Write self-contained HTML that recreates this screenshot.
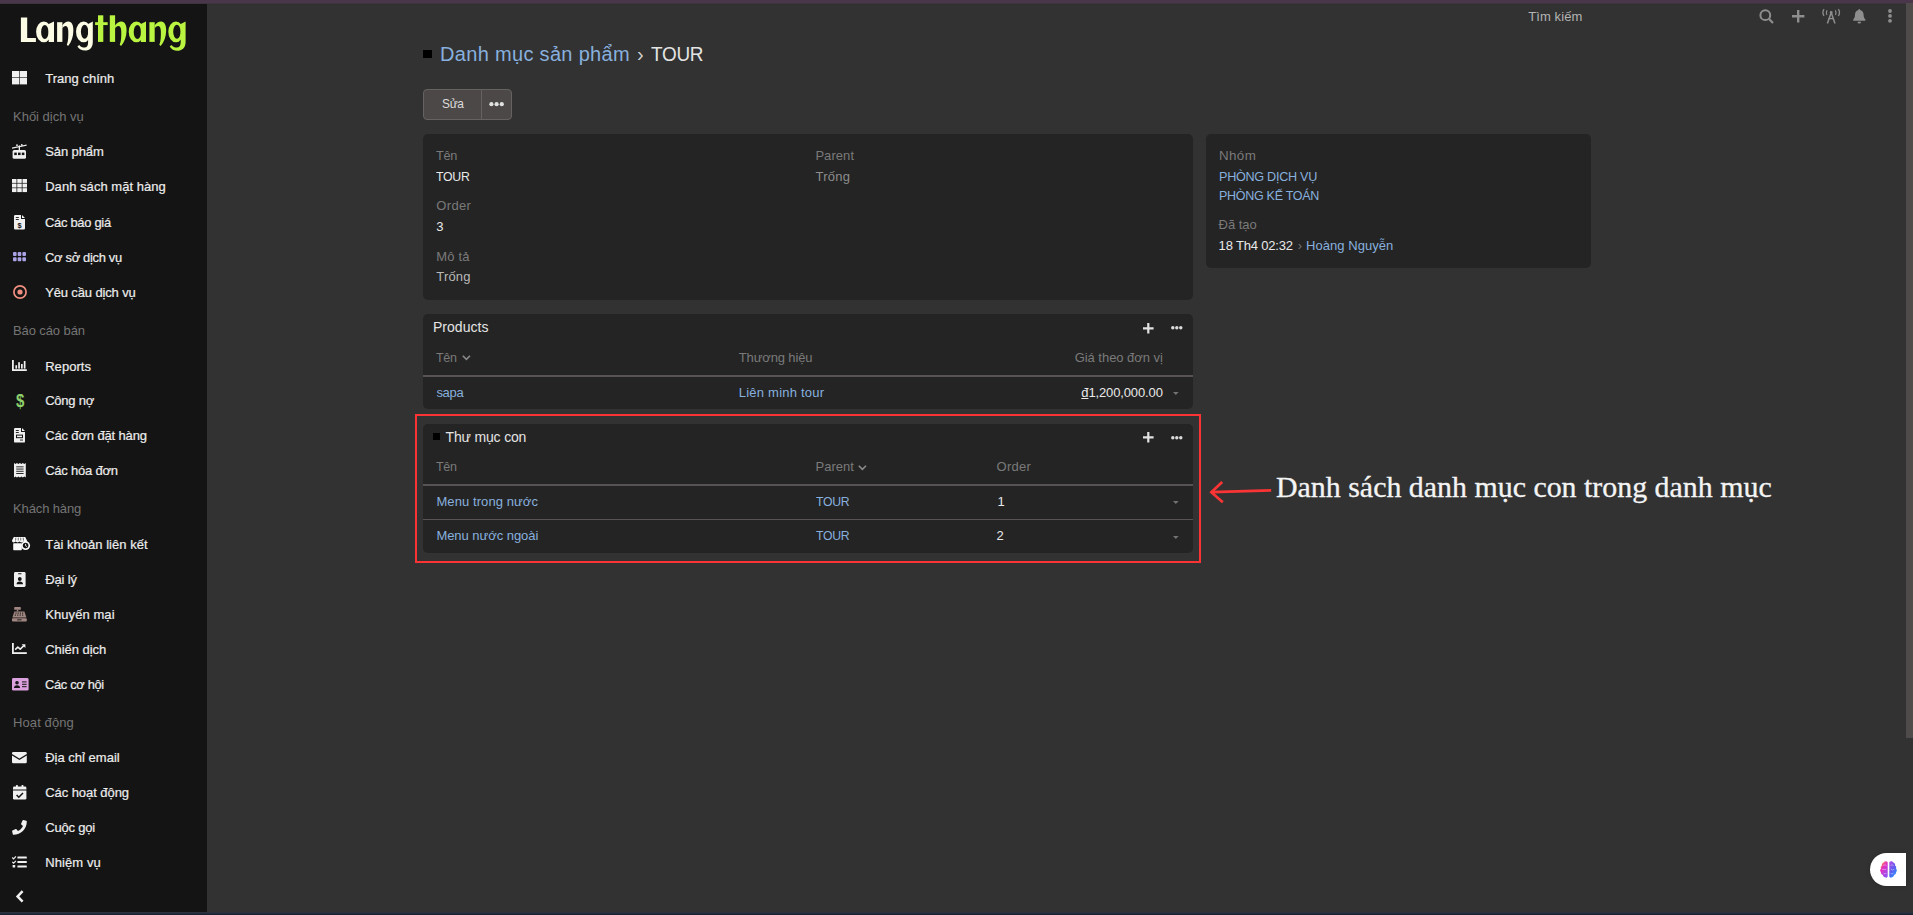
<!DOCTYPE html>
<html lang="vi">
<head>
<meta charset="utf-8">
<title>Danh mục sản phẩm › TOUR</title>
<style>
html,body{margin:0;padding:0;}
body{width:1913px;height:915px;overflow:hidden;position:relative;background:#323232;font-family:"Liberation Sans",sans-serif;}
.abs{position:absolute;}
.t{position:absolute;white-space:nowrap;font-family:"Liberation Sans",sans-serif;}
#topstrip{left:0;top:0;width:1913px;height:3px;background:#49364a;}
#topstrip2{left:0;top:3px;width:1913px;height:1px;background:#3d343e;}
#botstrip{left:0;top:912px;width:1913px;height:3px;background:linear-gradient(#2c3540,#17202d);}
#side{left:0;top:4px;width:207.4px;height:908px;background:#141414;}
#scroll{left:1906px;top:3px;width:7px;height:735px;background:#4f4b4a;}
.panel{position:absolute;background:#242424;border-radius:5px;}
.hr{position:absolute;height:1.25px;background:#575352;left:423.4px;width:769.2px;}
#btn{left:423px;top:89px;width:87px;height:29px;background:#4c4847;border:1px solid #666261;border-radius:4px;}
#btnsep{left:481px;top:90px;width:1px;height:29px;background:#666261;}
.dot{position:absolute;border-radius:50%;}
.red{background:#fa3434;}
#widget{left:1869.8px;top:853px;width:36.5px;height:33px;background:#fff;border-radius:16.5px 0 0 16.5px;box-shadow:0 0 5px rgba(0,0,0,.18);}
svg{position:absolute;overflow:visible;}
</style>
</head>
<body>
<div class="abs" id="side"></div>
<div class="abs" id="topstrip"></div>
<div class="abs" id="topstrip2"></div>
<div class="abs" id="botstrip"></div>
<div class="abs" id="scroll"></div>

<!-- panels -->
<div class="panel" style="left:423.4px;top:134px;width:769.2px;height:165.6px;"></div>
<div class="panel" style="left:1205.8px;top:134.4px;width:385.2px;height:133.2px;"></div>
<div class="panel" style="left:423.4px;top:314px;width:769.2px;height:95px;"></div>
<div class="panel" style="left:423.4px;top:424px;width:769.2px;height:129.4px;"></div>
<div class="hr" style="top:375.4px;"></div>
<div class="hr" style="top:484.4px;"></div>
<div class="hr" style="top:519.1px;"></div>

<!-- edit button -->
<div class="abs" id="btn"></div>
<div class="abs" id="btnsep"></div>

<!-- red annotation box -->
<div class="abs red" style="left:414.9px;top:413.8px;width:786.5px;height:1.75px;"></div>
<div class="abs red" style="left:414.9px;top:560.9px;width:786.5px;height:2.2px;"></div>
<div class="abs red" style="left:414.9px;top:413.8px;width:2.2px;height:149.3px;"></div>
<div class="abs red" style="left:1199.2px;top:413.8px;width:2.2px;height:149.3px;"></div>

<!-- chat widget -->
<div class="abs" id="widget"></div>

<div class="abs" style="left:423.4px;top:49.6px;width:8.8px;height:8.4px;background:#000"></div>
<div class="abs" style="left:432.7px;top:433.3px;width:7px;height:6.6px;background:#000"></div>
<svg style="left:12px;top:71.2px" width="15" height="13.4" viewBox="0 0 15 13.4"><g fill="#f0f0f0"><rect x="0" y="0" width="7.2" height="6.4"/><rect x="7.8" y="0" width="7.2" height="6.4"/><rect x="0" y="7" width="7.2" height="6.4"/><rect x="7.8" y="7" width="7.2" height="6.4"/></g></svg>
<svg style="left:12.4px;top:143.6px" width="14.6" height="14.8" viewBox="0 0 14.6 14.8"><g fill="#f0f0f0" stroke="none"><path d="M0 3.6 L14.6 0.6 L14.6 1.8 L0 4.8Z"/><rect x="6.7" y="1.4" width="1.3" height="5"/><circle cx="5" cy="1.2" r="0.9"/><circle cx="9.8" cy="0.9" r="0.9"/><rect x="0.6" y="6" width="13.4" height="8.8" rx="1.6"/></g><g fill="#141414"><rect x="2.2" y="8.6" width="2.6" height="2.5"/><rect x="6" y="8.6" width="2.6" height="2.5"/><rect x="9.8" y="8.6" width="2.6" height="2.5"/></g></svg>
<svg style="left:12px;top:179px" width="15" height="13.2" viewBox="0 0 15 13.2"><g fill="#f0f0f0"><rect x="0.00" y="0.00" width="4.5" height="3.9"/><rect x="5.25" y="0.00" width="4.5" height="3.9"/><rect x="10.50" y="0.00" width="4.5" height="3.9"/><rect x="0.00" y="4.60" width="4.5" height="3.9"/><rect x="5.25" y="4.60" width="4.5" height="3.9"/><rect x="10.50" y="4.60" width="4.5" height="3.9"/><rect x="0.00" y="9.20" width="4.5" height="3.9"/><rect x="5.25" y="9.20" width="4.5" height="3.9"/><rect x="10.50" y="9.20" width="4.5" height="3.9"/></g></svg>
<svg style="left:14.2px;top:214.6px" width="11" height="14.5" viewBox="0 0 11 14.5"><path fill="#f0f0f0" d="M1.2 0 H7 V4 H11 V13.3 Q11 14.5 9.8 14.5 H1.2 Q0 14.5 0 13.3 V1.2 Q0 0 1.2 0Z M8 0 L11 3 H8Z"/><g fill="#141414"><rect x="1.8" y="2" width="3" height="0.9"/><rect x="1.8" y="4" width="3" height="0.9"/></g><text x="5.5" y="12.6" font-family="Liberation Sans" font-weight="bold" font-size="7.4" text-anchor="middle" fill="#141414">$</text></svg>
<svg style="left:13px;top:252.2px" width="13" height="9.2" viewBox="0 0 13 9.2"><g fill="#a9a3e6"><rect x="0.00" y="0.00" width="3.6" height="3.9" rx="0.9"/><rect x="4.70" y="0.00" width="3.6" height="3.9" rx="0.9"/><rect x="9.40" y="0.00" width="3.6" height="3.9" rx="0.9"/><rect x="0.00" y="5.30" width="3.6" height="3.9" rx="0.9"/><rect x="4.70" y="5.30" width="3.6" height="3.9" rx="0.9"/><rect x="9.40" y="5.30" width="3.6" height="3.9" rx="0.9"/></g></svg>
<svg style="left:12.5px;top:285.2px" width="14" height="14" viewBox="0 0 14 14"><circle cx="7" cy="7" r="6.1" fill="none" stroke="#f08f80" stroke-width="1.7"/><circle cx="7" cy="7" r="2.6" fill="#f08f80"/></svg>
<svg style="left:12px;top:359.8px" width="14.8" height="11" viewBox="0 0 14.8 11"><g fill="#f0f0f0"><rect x="0" y="0" width="1.8" height="11"/><rect x="0" y="9.2" width="14.8" height="1.8"/><rect x="3.4" y="5.2" width="1.7" height="3.4"/><rect x="6.2" y="2.2" width="1.7" height="6.4"/><rect x="9" y="4" width="1.7" height="4.6"/><rect x="11.8" y="1" width="1.7" height="7.6"/></g></svg>
<span class="t" style="left:15.5px;top:390.6px;font-size:17.5px;line-height:20px;font-weight:bold;color:#8ed06c;transform:scaleX(.86);transform-origin:0 0;">$</span>
<svg style="left:13.8px;top:428.4px" width="11.2" height="14.6" viewBox="0 0 11.2 14.6"><path fill="#f0f0f0" d="M1.2 0 H7 V4 H11 V13.4 Q11 14.6 9.8 14.6 H1.2 Q0 14.6 0 13.4 V1.2 Q0 0 1.2 0Z M8 0 L11 3 H8Z"/><g fill="#141414"><rect x="1.8" y="2" width="3" height="0.9"/><rect x="1.8" y="4" width="3" height="0.9"/><rect x="2" y="6.6" width="7" height="3.6"/><rect x="6" y="11.6" width="3" height="0.9"/></g><rect x="3" y="7.6" width="5" height="1.6" fill="#f0f0f0"/></svg>
<svg style="left:13.5px;top:463.2px" width="11.8" height="14.6" viewBox="0 0 11.8 14.6"><path fill="#f0f0f0" d="M0 0 L1.5 1 L2.95 0 L4.4 1 L5.9 0 L7.4 1 L8.85 0 L10.3 1 L11.8 0 V14.6 L10.3 13.6 L8.85 14.6 L7.4 13.6 L5.9 14.6 L4.4 13.6 L2.95 14.6 L1.5 13.6 L0 14.6Z"/><g fill="#141414"><rect x="2.2" y="3.4" width="7.4" height="0.9"/><rect x="2.2" y="5.6" width="7.4" height="0.9"/><rect x="2.2" y="7.8" width="7.4" height="0.9"/><rect x="2.2" y="10" width="7.4" height="0.9"/></g></svg>
<svg style="left:12.2px;top:537.2px" width="18" height="13.4" viewBox="0 0 18 13.4"><g fill="#fafafa"><path d="M1.8 0 H13.2 L15 3.4 Q15 5.4 13.2 5.4 Q12 5.4 11.4 4.6 Q10.6 5.4 9.4 5.4 Q8.2 5.4 7.5 4.6 Q6.8 5.4 5.6 5.4 Q4.4 5.4 3.6 4.6 Q3 5.4 1.8 5.4 Q0 5.4 0 3.4Z"/><rect x="1.2" y="6.2" width="8.6" height="7" rx="0.6"/><circle cx="13.6" cy="8.6" r="4.5"/></g><g stroke="#141414" stroke-width="0.6" fill="none"><path d="M3.8 0.6 L3.6 3.6"/><path d="M6.3 0.6 L6.2 3.6"/><path d="M8.7 0.6 L8.8 3.6"/><path d="M11.2 0.6 L11.5 3.6"/></g><circle cx="13.6" cy="8.6" r="2.8" fill="#141414"/><path d="M13.6 6.9 V8.8 L14.9 9.6" stroke="#fafafa" stroke-width="0.9" fill="none"/></svg>
<svg style="left:13.6px;top:571.6px" width="11.6" height="15" viewBox="0 0 11.6 15"><rect x="0" y="0" width="11.6" height="15" rx="1.4" fill="#f0f0f0"/><g fill="#141414"><rect x="4" y="1.3" width="3.6" height="0.9" rx="0.4"/><circle cx="5.8" cy="7" r="1.9"/><path d="M2.6 12.2 Q2.6 9.6 5.8 9.6 Q9 9.6 9 12.2Z"/></g></svg>
<svg style="left:12.2px;top:606.8px" width="14.8" height="14.6" viewBox="0 0 14.8 14.6"><g fill="#a18781"><rect x="2.2" y="0" width="6.6" height="2.8" rx="0.5"/><rect x="4.8" y="2.8" width="1.5" height="1.6"/><path d="M2.4 4.4 H12.4 L14.4 10.6 H0.4Z"/><rect x="0" y="11.2" width="14.8" height="3.4" rx="0.8"/></g><g fill="#141414"><rect x="3.4" y="5.6" width="1.2" height="1"/><rect x="5.6" y="5.6" width="1.2" height="1"/><rect x="7.8" y="5.6" width="1.2" height="1"/><rect x="10" y="5.6" width="1.2" height="1"/><rect x="2.8" y="7.6" width="1.2" height="1"/><rect x="5.2" y="7.6" width="1.2" height="1"/><rect x="7.6" y="7.6" width="1.2" height="1"/><rect x="10" y="7.6" width="1.2" height="1"/><rect x="5.2" y="12.4" width="4.4" height="0.9"/></g></svg>
<svg style="left:12.2px;top:643.2px" width="14.8" height="11" viewBox="0 0 14.8 11"><g fill="#f0f0f0"><rect x="0" y="0" width="1.8" height="11"/><rect x="0" y="9.2" width="14.8" height="1.8"/></g><path d="M3.2 6.6 L5.8 4 L8.2 6.2 L12 2.4" stroke="#f0f0f0" stroke-width="1.6" fill="none" stroke-linejoin="round"/><path d="M9.6 1.2 H13.4 V5Z" fill="#f0f0f0"/></svg>
<svg style="left:12.2px;top:677.8px" width="16.6" height="12.6" viewBox="0 0 16.6 12.6"><rect x="0" y="0" width="16.6" height="12.6" rx="1.4" fill="#dba1de"/><g fill="#141414"><circle cx="5" cy="4.8" r="1.8"/><path d="M2 10 Q2 7.2 5 7.2 Q8 7.2 8 10Z"/><rect x="10" y="3.4" width="4.6" height="1"/><rect x="10" y="5.8" width="4.6" height="1"/><rect x="10" y="8.2" width="4.6" height="1"/></g></svg>
<svg style="left:12.2px;top:752.2px" width="14.8" height="11.2" viewBox="0 0 14.8 11.2"><path fill="#f0f0f0" d="M1.3 0 H13.5 Q14.8 0 14.8 1.3 V2 L7.4 6.6 L0 2 V1.3 Q0 0 1.3 0Z"/><path fill="#f0f0f0" d="M0 3.5 L7.4 8.1 L14.8 3.5 V9.9 Q14.8 11.2 13.5 11.2 H1.3 Q0 11.2 0 9.9Z"/></svg>
<svg style="left:12.8px;top:785.4px" width="13.4" height="14.6" viewBox="0 0 13.4 14.6"><g fill="#f0f0f0"><rect x="3" y="0" width="1.8" height="3" rx="0.5"/><rect x="8.6" y="0" width="1.8" height="3" rx="0.5"/><path d="M1.3 1.6 H12.1 Q13.4 1.6 13.4 2.9 V4.6 H0 V2.9 Q0 1.6 1.3 1.6Z"/><path d="M0 5.5 H13.4 V13.3 Q13.4 14.6 12.1 14.6 H1.3 Q0 14.6 0 13.3Z"/></g><path d="M3.6 10 L5.8 12.2 L10 8" stroke="#141414" stroke-width="1.5" fill="none"/></svg>
<svg style="left:12.2px;top:820.4px" width="14.8" height="14.8" viewBox="0 0 14.8 14.8"><path fill="#f0f0f0" d="M11.3 0.1 L14.2 0.8 Q14.8 1 14.8 1.5 C14.8 8.9 8.9 14.8 1.5 14.8 Q1 14.8 0.8 14.2 L0.1 11.3 Q0 10.7 0.5 10.5 L3.7 9.1 Q4.2 8.9 4.5 9.3 L5.9 11 C8.1 10 10 8.1 11 5.9 L9.3 4.5 Q8.9 4.2 9.1 3.7 L10.5 0.5 Q10.7 0 11.3 0.1Z"/></svg>
<svg style="left:12.2px;top:856.4px" width="14.8" height="12" viewBox="0 0 14.8 12"><g fill="#f0f0f0"><rect x="5.4" y="0.6" width="9.4" height="2" rx="0.5"/><rect x="5.4" y="5" width="9.4" height="2" rx="0.5"/><rect x="5.4" y="9.4" width="9.4" height="2" rx="0.5"/><rect x="0.6" y="9" width="2.6" height="2.6" rx="0.6"/></g><g stroke="#f0f0f0" stroke-width="1.2" fill="none"><path d="M0.3 1.5 L1.6 2.8 L3.9 0.4"/><path d="M0.3 5.9 L1.6 7.2 L3.9 4.8"/></g></svg>
<svg style="left:16px;top:890px" width="8" height="12.8" viewBox="0 0 8 12.8"><path d="M6.6 1.2 L1.6 6.4 L6.6 11.6" stroke="#f0f0f0" stroke-width="2.5" fill="none"/></svg>
<svg style="left:1759px;top:9px" width="15" height="15" viewBox="0 0 15 15"><circle cx="6.3" cy="6.2" r="4.9" fill="none" stroke="#8e8e8e" stroke-width="2"/><path d="M9.8 9.8 L14 14" stroke="#8e8e8e" stroke-width="2.2"/></svg>
<svg style="left:1792px;top:10.1px" width="12.4" height="12.4" viewBox="0 0 12.4 12.4"><path d="M6.2 0 V12.4 M0 6.2 H12.4" stroke="#8e8e8e" stroke-width="2.4" fill="none"/></svg>
<svg style="left:1822px;top:9.2px" width="18.4" height="14.6" viewBox="0 0 18.4 14.6"><g stroke="#8e8e8e" fill="none"><path d="M9.2 3.6 L5.4 14.4 M9.2 3.6 L13 14.4" stroke-width="1.5"/><path d="M6.6 9.6 H11.8" stroke-width="1.3"/><path d="M5 1.2 Q3.8 3.6 5 6" stroke-width="1.2"/><path d="M13.4 1.2 Q14.6 3.6 13.4 6" stroke-width="1.2"/><path d="M2 0.2 Q-0.2 3.6 2 7" stroke-width="1.3"/><path d="M16.4 0.2 Q18.6 3.6 16.4 7" stroke-width="1.3"/></g><circle cx="9.2" cy="3.4" r="1.4" fill="#8e8e8e"/></svg>
<svg style="left:1853px;top:9px" width="12.6" height="14.6" viewBox="0 0 12.6 14.6"><path fill="#8e8e8e" d="M6.3 0 Q7.1 0 7.1 0.9 C9.6 1.5 10.6 3.4 10.6 5.8 C10.6 8.6 11.6 9.6 12.4 10.4 Q12.8 11.8 11.8 11.8 H0.8 Q-0.2 11.8 0.2 10.4 C1 9.6 2 8.6 2 5.8 C2 3.4 3 1.5 5.5 0.9 Q5.5 0 6.3 0Z"/><path fill="#8e8e8e" d="M4.5 12.7 H8.1 Q8.1 14.6 6.3 14.6 Q4.5 14.6 4.5 12.7Z"/></svg>
<svg style="left:1887.6px;top:9.0px" width="4" height="14" viewBox="0 0 4 14"><g fill="#8e8e8e"><circle cx="2" cy="2" r="1.9"/><circle cx="2" cy="6.9" r="1.9"/><circle cx="2" cy="11.8" r="1.9"/></g></svg>
<svg style="left:488.8px;top:101.9px" width="15" height="4.4" viewBox="0 0 15 4.4"><g fill="#e2e2e2"><circle cx="2.4" cy="2.2" r="2.1"/><circle cx="7.6" cy="2.2" r="2.1"/><circle cx="12.8" cy="2.2" r="2.1"/></g></svg>
<svg style="left:1142.8px;top:322.5px" width="10.6" height="10.6" viewBox="0 0 10.6 10.6"><path d="M5.3 0 V10.6 M0 5.3 H10.6" stroke="#e2e2e2" stroke-width="2.2" fill="none"/></svg>
<svg style="left:1171.4px;top:326.0px" width="11.6" height="3.6" viewBox="0 0 11.6 3.6"><g fill="#dcdcdc"><circle cx="1.8" cy="1.8" r="1.7"/><circle cx="5.8" cy="1.8" r="1.7"/><circle cx="9.8" cy="1.8" r="1.7"/></g></svg>
<svg style="left:1142.8px;top:432.3px" width="10.6" height="10.6" viewBox="0 0 10.6 10.6"><path d="M5.3 0 V10.6 M0 5.3 H10.6" stroke="#e2e2e2" stroke-width="2.2" fill="none"/></svg>
<svg style="left:1171.4px;top:435.8px" width="11.6" height="3.6" viewBox="0 0 11.6 3.6"><g fill="#dcdcdc"><circle cx="1.8" cy="1.8" r="1.7"/><circle cx="5.8" cy="1.8" r="1.7"/><circle cx="9.8" cy="1.8" r="1.7"/></g></svg>
<svg style="left:1172.8px;top:391.6px" width="5.6" height="3" viewBox="0 0 5.6 3"><path d="M0 0 H5.6 L2.8 3Z" fill="#737373"/></svg>
<svg style="left:1172.8px;top:501.4px" width="5.6" height="3" viewBox="0 0 5.6 3"><path d="M0 0 H5.6 L2.8 3Z" fill="#737373"/></svg>
<svg style="left:1172.8px;top:536.2px" width="5.6" height="3" viewBox="0 0 5.6 3"><path d="M0 0 H5.6 L2.8 3Z" fill="#737373"/></svg>
<svg style="left:461.8px;top:355.20000000000005px" width="8.8" height="5.4" viewBox="0 0 8.8 5.4"><path d="M0.8 0.8 L4.4 4.4 L8 0.8" stroke="#8a8a8a" stroke-width="1.6" fill="none"/></svg>
<svg style="left:858.0px;top:464.6px" width="8.8" height="5.4" viewBox="0 0 8.8 5.4"><path d="M0.8 0.8 L4.4 4.4 L8 0.8" stroke="#8a8a8a" stroke-width="1.6" fill="none"/></svg>
<svg style="left:1208px;top:478px" width="66" height="28" viewBox="0 0 66 28"><g stroke="#fa3434" stroke-width="2.7" fill="none" stroke-linecap="butt" stroke-linejoin="miter"><path d="M3.6 14.1 L63.2 12.4"/><path d="M14.2 3.9 L3.4 14.2 L14.8 24.3"/></g></svg>
<svg style="left:1879.5px;top:861px" width="17.1" height="16.8" viewBox="0 0 17.1 16.8"><defs><linearGradient id="bg1" x1="0.2" y1="0" x2="0.8" y2="1"><stop offset="0" stop-color="#ff9a30"/><stop offset=".38" stop-color="#e22fc4"/><stop offset="1" stop-color="#8a55f4"/></linearGradient><linearGradient id="bg2" x1="0.2" y1="0" x2="0.8" y2="1"><stop offset="0" stop-color="#a94fe6"/><stop offset=".55" stop-color="#5560f2"/><stop offset="1" stop-color="#2aa6ff"/></linearGradient></defs><path fill="url(#bg1)" d="M7.7 1.2 C7 0 4.6 -0.2 3.6 1.6 C2.2 2 1.6 3.4 1.9 4.6 C0.7 5.4 0.5 6.8 1 7.8 C-0.2 8.6 -0.2 10.2 0.9 11 C0.6 12.4 1.5 13.6 2.7 13.8 C3 15.6 4.6 16.4 5.6 16.6 C6.8 16.9 7.7 16 7.7 15Z"/><path fill="url(#bg2)" d="M9.3 1.2 C10 0 12.4 -0.2 13.4 1.6 C14.8 2 15.4 3.4 15.1 4.6 C16.3 5.4 16.5 6.8 16 7.8 C17.2 8.6 17.2 10.2 16.1 11 C16.4 12.4 15.5 13.6 14.3 13.8 C14 15.6 12.4 16.4 11.4 16.6 C10.2 16.9 9.3 16 9.3 15Z"/><g stroke="#fff" stroke-opacity=".5" stroke-width=".8" fill="none"><path d="M3.4 4.4 Q5 3.2 6.4 4.4"/><path d="M2.2 8.4 H6.2"/><path d="M3.6 12.2 Q5 13.4 6.4 12.4"/><path d="M10.6 4.4 Q12 3.2 13.6 4.6"/><path d="M10.8 8 L12.4 9.2 L14.4 8"/><path d="M10.6 12.4 Q12 13.4 13.4 12.2"/></g></svg>
<svg style="left:0;top:0" width="207" height="60" viewBox="0 0 207 60"><g fill="#fcfce4"><path d="M20.9 17.4 H27.2 V38.1 H35.9 V41.9 H20.9Z"/><path fill-rule="evenodd" d="M36.10 31.8 A7.7 10.4 0 1 0 51.50 31.8 A7.7 10.4 0 1 0 36.10 31.8Z M41.10 32 A3.7 7 0 1 1 48.50 32 A3.7 7 0 1 1 41.10 32Z"/><path d="M48.70 24 L54.00 21.4 V41.9 H48.70Z"/><rect x="57.1" y="22.2" width="5.3" height="19.70"/><path d="M62.40 25.2 C64.04 23 66.45 21.4 68.47 21.5 C71.94 21.7 73.49 25.5 73.39 30.5 C73.29 36.5 71.56 42 68.09 45.9 L66.83 44.7 C68.38 41 68.38 36 68.28 31 C68.18 27.4 67.12 26 65.58 26 C64.23 26 63.07 27.2 62.40 28.6Z"/><path fill-rule="evenodd" d="M76.00 31.8 A7.6 10.4 0 1 0 91.20 31.8 A7.6 10.4 0 1 0 76.00 31.8Z M80.90 31.8 A3.7 7 0 1 1 88.30 31.8 A3.7 7 0 1 1 80.90 31.8Z"/><path d="M88.10 24 L92.80 21.6 V42 C92.80 48 89.50 50.5 85.00 50.5 C81.80 50.5 79.00 49.2 77.40 46.4 L79.20 44.9 C80.60 46.9 82.60 47.6 84.40 47.6 C87.00 47.6 88.10 45.6 88.10 42Z"/></g><g fill="#b8f440"><rect x="98" y="15.3" width="5.3" height="26.6"/><rect x="95.1" y="22.2" width="12.6" height="2.85"/><rect x="109.8" y="15.3" width="5.3" height="26.60"/><path d="M115.10 25.2 C116.81 23 119.33 21.4 121.44 21.5 C125.06 21.7 126.67 25.5 126.57 30.5 C126.47 36.5 124.66 42 121.04 45.9 L119.73 44.7 C121.34 41 121.34 36 121.24 31 C121.14 27.4 120.03 26 118.42 26 C117.01 26 115.80 27.2 115.10 28.6Z"/><path fill-rule="evenodd" d="M128.70 31.8 A7.7 10.4 0 1 0 144.10 31.8 A7.7 10.4 0 1 0 128.70 31.8Z M133.70 32 A3.7 7 0 1 1 141.10 32 A3.7 7 0 1 1 133.70 32Z"/><path d="M140.80 24 L146.00 21.4 V41.9 H140.80Z"/><rect x="149.4" y="22.2" width="5.3" height="19.70"/><path d="M154.70 25.2 C156.41 23 158.93 21.4 161.04 21.5 C164.66 21.7 166.27 25.5 166.17 30.5 C166.07 36.5 164.26 42 160.64 45.9 L159.33 44.7 C160.94 41 160.94 36 160.84 31 C160.74 27.4 159.63 26 158.02 26 C156.61 26 155.40 27.2 154.70 28.6Z"/><path fill-rule="evenodd" d="M168.30 31.8 A7.6 10.4 0 1 0 183.50 31.8 A7.6 10.4 0 1 0 168.30 31.8Z M173.20 31.8 A3.7 7 0 1 1 180.60 31.8 A3.7 7 0 1 1 173.20 31.8Z"/><path d="M180.70 24 L185.60 21.6 V42 C185.60 48 181.80 50.8 177.30 50.8 C174.10 50.8 171.30 49.2 169.70 46.4 L171.50 44.9 C172.90 46.9 174.90 47.6 176.70 47.6 C179.30 47.6 180.70 45.6 180.70 42Z"/></g></svg>

<span class="t" style="left:45.2px;top:70.7px;font-size:13px;line-height:16px;color:#ececec;letter-spacing:0.02px;-webkit-text-stroke:.2px #ececec;">Trang chính</span>
<span class="t" style="left:45.2px;top:143.7px;font-size:13px;line-height:16px;color:#ececec;letter-spacing:-0.1px;-webkit-text-stroke:.2px #ececec;">Sản phẩm</span>
<span class="t" style="left:45.2px;top:178.7px;font-size:13px;line-height:16px;color:#ececec;letter-spacing:0.04px;-webkit-text-stroke:.2px #ececec;">Danh sách mặt hàng</span>
<span class="t" style="left:45.2px;top:214.8px;font-size:13px;line-height:16px;color:#ececec;letter-spacing:-0.3px;transform:scaleX(0.9956);transform-origin:0 0;-webkit-text-stroke:.2px #ececec;">Các báo giá</span>
<span class="t" style="left:45.2px;top:249.9px;font-size:13px;line-height:16px;color:#ececec;letter-spacing:-0.3px;transform:scaleX(0.9928);transform-origin:0 0;-webkit-text-stroke:.2px #ececec;">Cơ sở dịch vụ</span>
<span class="t" style="left:45.2px;top:284.8px;font-size:13px;line-height:16px;color:#ececec;letter-spacing:-0.14px;-webkit-text-stroke:.2px #ececec;">Yêu cầu dịch vụ</span>
<span class="t" style="left:45.2px;top:358.5px;font-size:13px;line-height:16px;color:#ececec;letter-spacing:0.04px;-webkit-text-stroke:.2px #ececec;">Reports</span>
<span class="t" style="left:45.2px;top:393.3px;font-size:13px;line-height:16px;color:#ececec;letter-spacing:-0.24px;-webkit-text-stroke:.2px #ececec;">Công nợ</span>
<span class="t" style="left:45.2px;top:428.1px;font-size:13px;line-height:16px;color:#ececec;letter-spacing:-0.14px;-webkit-text-stroke:.2px #ececec;">Các đơn đặt hàng</span>
<span class="t" style="left:45.2px;top:463.1px;font-size:13px;line-height:16px;color:#ececec;letter-spacing:-0.22px;-webkit-text-stroke:.2px #ececec;">Các hóa đơn</span>
<span class="t" style="left:45.2px;top:536.6px;font-size:13px;line-height:16px;color:#ececec;letter-spacing:0.03px;-webkit-text-stroke:.2px #ececec;">Tài khoản liên kết</span>
<span class="t" style="left:45.2px;top:571.7px;font-size:13px;line-height:16px;color:#ececec;letter-spacing:-0.16px;-webkit-text-stroke:.2px #ececec;">Đại lý</span>
<span class="t" style="left:45.2px;top:606.5px;font-size:13px;line-height:16px;color:#ececec;letter-spacing:0.08px;-webkit-text-stroke:.2px #ececec;">Khuyến mại</span>
<span class="t" style="left:45.2px;top:641.5px;font-size:13px;line-height:16px;color:#ececec;letter-spacing:-0.05px;-webkit-text-stroke:.2px #ececec;">Chiến dịch</span>
<span class="t" style="left:45.2px;top:676.5px;font-size:13px;line-height:16px;color:#ececec;letter-spacing:-0.3px;transform:scaleX(0.9864);transform-origin:0 0;-webkit-text-stroke:.2px #ececec;">Các cơ hội</span>
<span class="t" style="left:45.2px;top:750.3px;font-size:13px;line-height:16px;color:#ececec;letter-spacing:0.01px;-webkit-text-stroke:.2px #ececec;">Địa chỉ email</span>
<span class="t" style="left:45.2px;top:785.3px;font-size:13px;line-height:16px;color:#ececec;letter-spacing:-0.06px;-webkit-text-stroke:.2px #ececec;">Các hoạt động</span>
<span class="t" style="left:45.2px;top:820.3px;font-size:13px;line-height:16px;color:#ececec;letter-spacing:-0.19px;-webkit-text-stroke:.2px #ececec;">Cuộc gọi</span>
<span class="t" style="left:45.2px;top:855.1px;font-size:13px;line-height:16px;color:#ececec;letter-spacing:0.1px;-webkit-text-stroke:.2px #ececec;">Nhiệm vụ</span>
<span class="t" style="left:13.0px;top:109.1px;font-size:13px;line-height:16px;color:#757575;letter-spacing:-0.01px;">Khối dịch vụ</span>
<span class="t" style="left:13.0px;top:322.5px;font-size:13px;line-height:16px;color:#757575;letter-spacing:-0.1px;">Báo cáo bán</span>
<span class="t" style="left:13.0px;top:501.1px;font-size:13px;line-height:16px;color:#757575;letter-spacing:-0.12px;">Khách hàng</span>
<span class="t" style="left:13.0px;top:715.3px;font-size:13px;line-height:16px;color:#757575;letter-spacing:0.1px;">Hoạt động</span>
<span class="t" style="left:440.0px;top:41.9px;font-size:20px;line-height:24px;color:#88b0de;letter-spacing:0.32px;">Danh mục sản phẩm</span>
<span class="t" style="left:637.0px;top:41.9px;font-size:20px;line-height:24px;color:#cfcfcf;letter-spacing:0px;">›</span>
<span class="t" style="left:650.7px;top:41.9px;font-size:20px;line-height:24px;color:#e4e4e4;letter-spacing:-0.3px;transform:scaleX(0.9474);transform-origin:0 0;">TOUR</span>
<span class="t" style="left:1528.3px;top:8.9px;font-size:13px;line-height:16px;color:#b4b4b4;letter-spacing:0.08px;">Tìm kiếm</span>
<span class="t" style="left:441.6px;top:96.1px;font-size:13px;line-height:16px;color:#dcdcdc;letter-spacing:-0.3px;transform:scaleX(0.9163);transform-origin:0 0;">Sửa</span>
<span class="t" style="left:436.3px;top:148.1px;font-size:13px;line-height:16px;color:#7a7a7a;letter-spacing:-0.3px;transform:scaleX(0.9768);transform-origin:0 0;">Tên</span>
<span class="t" style="left:436.3px;top:168.7px;font-size:13px;line-height:16px;color:#e9e9e9;letter-spacing:-0.3px;transform:scaleX(0.9465);transform-origin:0 0;">TOUR</span>
<span class="t" style="left:436.3px;top:198.1px;font-size:13px;line-height:16px;color:#7a7a7a;letter-spacing:0.32px;">Order</span>
<span class="t" style="left:436.3px;top:218.7px;font-size:13px;line-height:16px;color:#e9e9e9;letter-spacing:0px;">3</span>
<span class="t" style="left:436.3px;top:248.7px;font-size:13px;line-height:16px;color:#7a7a7a;letter-spacing:0.17px;">Mô tả</span>
<span class="t" style="left:436.3px;top:268.9px;font-size:13px;line-height:16px;color:#b9b9b9;letter-spacing:0.18px;">Trống</span>
<span class="t" style="left:815.4px;top:148.1px;font-size:13px;line-height:16px;color:#7a7a7a;letter-spacing:0.06px;">Parent</span>
<span class="t" style="left:815.4px;top:168.7px;font-size:13px;line-height:16px;color:#8d8d8d;letter-spacing:0.28px;">Trống</span>
<span class="t" style="left:1218.6px;top:148.1px;font-size:13px;line-height:16px;color:#7a7a7a;letter-spacing:0.35px;transform:scaleX(1.0297);transform-origin:0 0;">Nhóm</span>
<span class="t" style="left:1218.6px;top:168.7px;font-size:13px;line-height:16px;color:#88b0de;letter-spacing:-0.3px;transform:scaleX(0.9720);transform-origin:0 0;">PHÒNG DỊCH VỤ</span>
<span class="t" style="left:1218.6px;top:187.9px;font-size:13px;line-height:16px;color:#88b0de;letter-spacing:-0.3px;transform:scaleX(0.9617);transform-origin:0 0;">PHÒNG KẾ TOÁN</span>
<span class="t" style="left:1218.6px;top:217.1px;font-size:13px;line-height:16px;color:#7a7a7a;letter-spacing:-0.02px;">Đã tạo</span>
<span class="t" style="left:1218.6px;top:237.9px;font-size:13px;line-height:16px;color:#e9e9e9;letter-spacing:-0.18px;">18 Th4 02:32</span>
<span class="t" style="left:1297.8px;top:237.9px;font-size:13px;line-height:16px;color:#6f6f6f;letter-spacing:0px;">›</span>
<span class="t" style="left:1306.0px;top:237.9px;font-size:13px;line-height:16px;color:#88b0de;letter-spacing:0.05px;">Hoàng Nguyễn</span>
<span class="t" style="left:432.9px;top:319.1px;font-size:14px;line-height:17px;color:#e4e4e4;letter-spacing:0.05px;">Products</span>
<span class="t" style="left:436.4px;top:349.7px;font-size:13px;line-height:16px;color:#7a7a7a;letter-spacing:-0.3px;transform:scaleX(0.9630);transform-origin:0 0;">Tên</span>
<span class="t" style="left:738.8px;top:349.7px;font-size:13px;line-height:16px;color:#7a7a7a;letter-spacing:-0.14px;">Thương hiệu</span>
<span class="t" style="left:1074.7px;top:349.7px;font-size:13px;line-height:16px;color:#7a7a7a;letter-spacing:-0.04px;">Giá theo đơn vị</span>
<span class="t" style="left:436.4px;top:384.7px;font-size:13px;line-height:16px;color:#88b0de;letter-spacing:-0.3px;">sapa</span>
<span class="t" style="left:738.8px;top:384.7px;font-size:13px;line-height:16px;color:#88b0de;letter-spacing:0.22px;">Liên minh tour</span>
<span class="t" style="left:1081.3px;top:384.7px;font-size:13px;line-height:16px;color:#e9e9e9;letter-spacing:-0.13px;"><span style="text-decoration:underline;text-underline-offset:1px">đ</span>1,200,000.00</span>
<span class="t" style="left:445.5px;top:428.9px;font-size:14px;line-height:17px;color:#e4e4e4;letter-spacing:-0.16px;">Thư mục con</span>
<span class="t" style="left:436.4px;top:459.1px;font-size:13px;line-height:16px;color:#7a7a7a;letter-spacing:-0.3px;transform:scaleX(0.9630);transform-origin:0 0;">Tên</span>
<span class="t" style="left:815.6px;top:459.1px;font-size:13px;line-height:16px;color:#7a7a7a;letter-spacing:-0.0px;">Parent</span>
<span class="t" style="left:996.6px;top:459.1px;font-size:13px;line-height:16px;color:#7a7a7a;letter-spacing:0.24px;">Order</span>
<span class="t" style="left:436.4px;top:494.3px;font-size:13px;line-height:16px;color:#88b0de;letter-spacing:0.09px;">Menu trong nước</span>
<span class="t" style="left:815.6px;top:494.3px;font-size:13px;line-height:16px;color:#88b0de;letter-spacing:-0.3px;transform:scaleX(0.9409);transform-origin:0 0;">TOUR</span>
<span class="t" style="left:997.6px;top:494.3px;font-size:13px;line-height:16px;color:#e9e9e9;letter-spacing:0px;">1</span>
<span class="t" style="left:436.4px;top:528.3px;font-size:13px;line-height:16px;color:#88b0de;letter-spacing:-0.04px;">Menu nước ngoài</span>
<span class="t" style="left:815.6px;top:528.3px;font-size:13px;line-height:16px;color:#88b0de;letter-spacing:-0.3px;transform:scaleX(0.9409);transform-origin:0 0;">TOUR</span>
<span class="t" style="left:996.6px;top:528.3px;font-size:13px;line-height:16px;color:#e9e9e9;letter-spacing:0px;">2</span>
<span class="t" style="left:1275.7px;top:470.6px;font-size:28.5px;line-height:34px;color:#f4f4f4;letter-spacing:0px;transform:scaleX(1.0491);transform-origin:0 0;font-family:'Liberation Serif',serif;-webkit-text-stroke:.3px #f4f4f4;">Danh sách danh mục con trong danh mục</span>
</body>
</html>
